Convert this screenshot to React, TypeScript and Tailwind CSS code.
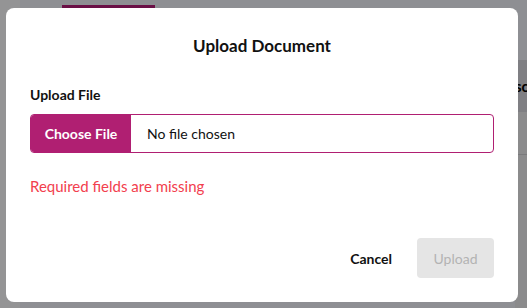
import { useState } from "react";

const App = () => {
  const [fileName] = useState("");

  return (
    <div
      className="relative w-[527px] h-[308px] overflow-hidden bg-[#8e8f93]"
      style={{ fontFamily: "Lato, 'Open Sans', sans-serif" }}
    >
      {/* page behind the backdrop */}
      <div className="flex h-full">
        <div className="w-[20px] h-full bg-[#949495]" />
        <div className="flex-1 flex flex-col">
          <div className="h-[5px]" />
          <div className="ml-[42px] w-[93px] h-[3px] bg-[#6a1046]" />
        </div>
        <div className="w-[12px] flex flex-col">
          <div className="h-[60px]" />
          <div className="h-[52px] bg-[#7f7f83] flex items-center text-[15px] font-bold text-black leading-none overflow-hidden">
            sc
          </div>
          <div className="h-[43px] bg-[#8b8b8c] border-b border-[#7a7a7c]" />
          <div className="flex-1 bg-[#8b8b8c]" />
        </div>
      </div>

      {/* modal */}
      <div className="absolute left-[6px] top-[8px] w-[512px] h-[294px] bg-white rounded-[8px] flex flex-col px-[24px]">
        <h2 className="mt-[26px] text-center text-[17px] font-bold text-[#111] leading-[24px]">
          Upload Document
        </h2>

        <label className="mt-[28px] text-[14px] font-bold text-[#111] leading-[18px]">
          Upload File
        </label>

        <div className="mt-[10px] flex h-[39px] border border-[#b01f72] rounded-[4px] overflow-hidden">
          <button className="w-[100px] bg-[#b01f72] text-white text-[14px] font-bold">
            Choose File
          </button>
          <div className="flex items-center pl-[16px] text-[14px] text-[#111]">
            {fileName || "No file chosen"}
          </div>
        </div>

        <p className="mt-[23px] text-[15px] text-[#f2404e] leading-[20px]">
          Required fields are missing
        </p>

        <div className="mt-auto mb-[24px] flex justify-end items-center gap-[25px]">
          <button className="text-[14px] font-bold text-[#111]">Cancel</button>
          <button
            disabled
            className="w-[77px] h-[40px] rounded-[4px] bg-[#e5e5e5] text-[#b3b3b3] text-[14px]"
          >
            Upload
          </button>
        </div>
      </div>
    </div>
  );
};

export default App;
